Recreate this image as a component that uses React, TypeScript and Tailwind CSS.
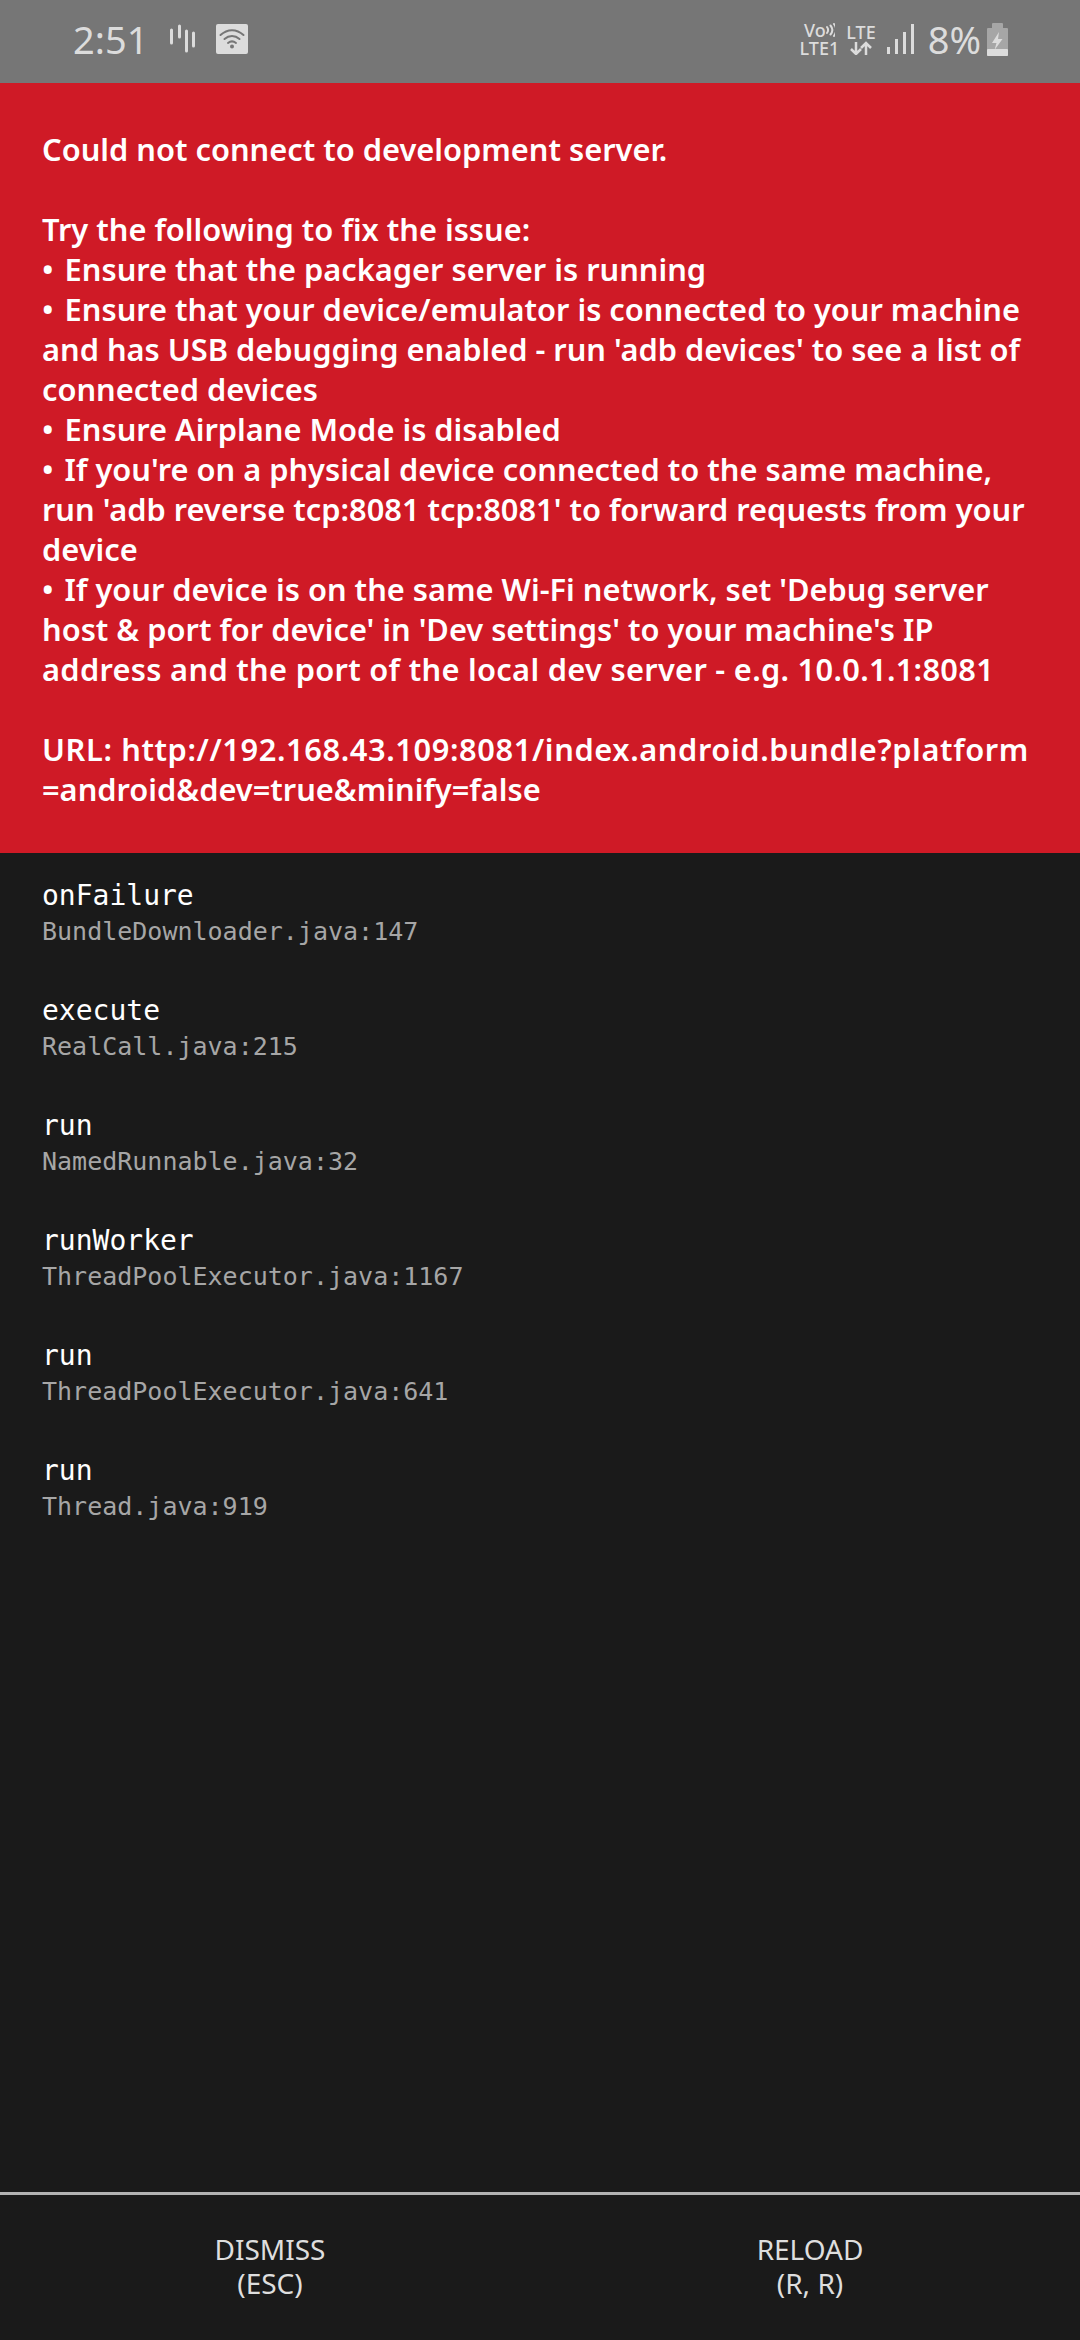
const frames = [
  { method: "onFailure", file: "BundleDownloader.java:147" },
  { method: "execute", file: "RealCall.java:215" },
  { method: "run", file: "NamedRunnable.java:32" },
  { method: "runWorker", file: "ThreadPoolExecutor.java:1167" },
  { method: "run", file: "ThreadPoolExecutor.java:641" },
  { method: "run", file: "Thread.java:919" },
];

const message = [
  "Could not connect to development server.",
  "",
  "Try the following to fix the issue:",
  "• Ensure that the packager server is running",
  "• Ensure that your device/emulator is connected to your machine",
  "and has USB debugging enabled - run 'adb devices' to see a list of",
  "connected devices",
  "• Ensure Airplane Mode is disabled",
  "• If you're on a physical device connected to the same machine,",
  "run 'adb reverse tcp:8081 tcp:8081' to forward requests from your",
  "device",
  "• If your device is on the same Wi-Fi network, set 'Debug server",
  "host & port for device' in 'Dev settings' to your machine's IP",
  "address and the port of the local dev server - e.g. 10.0.1.1:8081",
  "",
  "URL: http://192.168.43.109:8081/index.android.bundle?platform",
  "=android&dev=true&minify=false",
];

function StatusBar() {
  return (
    <div className="flex h-[83px] items-start justify-between bg-[#767676] pl-[73px] pr-[72px] pt-[19px] text-[#dcdcdc]">
      <div className="flex items-center">
        <span className="text-[38px] leading-[40px] font-['Noto_Sans',sans-serif]">2:51</span>
        <svg width="27" height="30" viewBox="0 0 27 30" className="ml-[21px]" fill="none" stroke="#dcdcdc" strokeWidth="3" strokeLinecap="round">
          <path d="M2.500 6v13M10.500 2v11M17.500 7v20M24.500 9v13" />
        </svg>
        <svg width="32" height="30" viewBox="0 0 32 30" className="ml-[20px]">
          <rect width="32" height="30" rx="2" fill="#dcdcdc" />
          <g fill="none" stroke="#767676" strokeWidth="2" strokeLinecap="round">
            <path d="M4.500 11c7-6.500 16-6.500 23 0" />
            <path d="M8.500 15c4.500-4 10.500-4 15 0" />
            <path d="M12 19c2.500-2 5.500-2 8 0" />
          </g>
          <circle cx="16" cy="22.500" r="2" fill="#767676" />
        </svg>
      </div>
      <div className="flex items-center font-['Noto_Sans',sans-serif]">
        <div className="flex flex-col items-center text-[18px] leading-[18px] font-medium">
          <div className="flex items-center">
            <span>Vo</span>
            <svg width="9" height="14" viewBox="0 0 9 14" fill="none" stroke="#dcdcdc" strokeWidth="2" strokeLinecap="round">
              <path d="M1 4c1.500 2 1.500 4 0 6M4.500 2.500c2.500 3 2.500 6 0 9M8 1c3 4 3 8 0 12" />
            </svg>
          </div>
          <span>LTE1</span>
        </div>
        <div className="ml-[7px] flex flex-col items-center text-[18px] leading-[18px] font-medium">
          <span>LTE</span>
          <svg width="24" height="14" viewBox="0 0 24 14" fill="none" stroke="#dcdcdc" strokeWidth="2.500">
            <path d="M7 1v12M2 8l5 5 5-5M17 14V2M12 7l5-5 5 5" />
          </svg>
        </div>
        <svg width="27" height="30" viewBox="0 0 27 30" className="ml-[11px]" fill="#dcdcdc">
          <rect x="0" y="23" width="3" height="7" />
          <rect x="8" y="15" width="3" height="15" />
          <rect x="16" y="8" width="3" height="22" />
          <rect x="24" y="0" width="3" height="30" />
        </svg>
        <span className="ml-[14px] text-[38px] leading-[40px]">8%</span>
        <svg width="21" height="33" viewBox="0 0 21 33" className="ml-[6px]">
          <rect x="5" y="0" width="11" height="6" rx="1" fill="#a6a6a6" />
          <rect x="0" y="5" width="21" height="28" rx="1" fill="#a6a6a6" />
          <rect x="0" y="26" width="21" height="7" rx="1" fill="#dcdcdc" />
          <path d="M12 9l-7 11h4.500l-2 7 8-11h-4.500z" fill="#dcdcdc" />
        </svg>
      </div>
    </div>
  );
}

function ActionButton({ label, hint }: { label: string; hint: string }) {
  return (
    <div className="flex flex-1 flex-col items-center pt-[37px] text-center text-[28px] leading-[34px] text-[#dedede]">
      <span>{label}</span>
      <span>{hint}</span>
    </div>
  );
}

function MessageLine({ line }: { line: string }) {
  if (line.startsWith("• ")) {
    return (
      <div className="h-[40px]">
        <span className="mr-[3px]">•</span> {line.slice(2)}
      </div>
    );
  }
  if (line.startsWith("URL:")) return <div className="h-[40px] tracking-[0.6px]">{line}</div>;
  if (line.startsWith("address")) return <div className="h-[40px] tracking-[0.3px]">{line}</div>;
  return <div className="h-[40px]">{line}</div>;
}

export default function App() {
  return (
    <div className="flex h-[2340px] w-[1080px] flex-col overflow-hidden bg-[#1a1a1a] font-['Noto_Sans',sans-serif]">
      <StatusBar />

      {/* redbox message */}
      <div className="h-[770px] bg-[#cf1a26] px-[42px] pt-[46px] text-[30.8px] leading-[40px] font-semibold whitespace-pre text-white">
        {message.map((line, i) => (
          <MessageLine key={i} line={line} />
        ))}
      </div>

      {/* stack frames */}
      <div className="flex-1 px-[42px] pt-[25px] font-['DejaVu_Sans_Mono',monospace]">
        {frames.map((frame, i) => (
          <div key={i} className="h-[115px]">
            <div className="text-[28px] leading-[36px] text-white">{frame.method}</div>
            <div className="text-[25px] leading-[36px] text-[#a6a6a6]">{frame.file}</div>
          </div>
        ))}
      </div>

      <div className="flex h-[148px] border-t-[3px] border-[#b3b3b3]">
        <ActionButton label="DISMISS" hint="(ESC)" />
        <ActionButton label="RELOAD" hint="(R, R)" />
      </div>
    </div>
  );
}
